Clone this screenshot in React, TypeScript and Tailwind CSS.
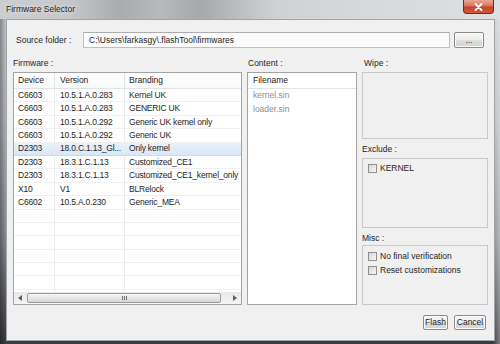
import React from "react";

const firmwares: [string, string, string][] = [
  ["C6603", "10.5.1.A.0.283", "Kernel UK"],
  ["C6603", "10.5.1.A.0.283", "GENERIC UK"],
  ["C6603", "10.5.1.A.0.292", "Generic UK kernel only"],
  ["C6603", "10.5.1.A.0.292", "Generic UK"],
  ["D2303", "18.0.C.1.13_Gl...", "Only kernel"],
  ["D2303", "18.3.1.C.1.13", "Customized_CE1"],
  ["D2303", "18.3.1.C.1.13", "Customized_CE1_kernel_only"],
  ["X10", "V1", "BLRelock"],
  ["C6602", "10.5.A.0.230", "Generic_MEA"],
];

const SELECTED = 4;

// small win7 style checkbox
const Checkbox = () => (
  <span className="block w-[9px] h-[9px] shrink-0 border border-[#8f8f8f] bg-[linear-gradient(135deg,#d6d6d6,#f7f7f7)]" />
);

const WinButton = ({ label, width }: { label: string; width: string }) => (
  <button
    className={`${width} h-full flex items-center justify-center rounded-[2px] border border-[#8a8a8a] bg-[linear-gradient(to_bottom,#f6f6f6_0%,#ececec_50%,#dedede_50%,#d4d4d4_100%)] shadow-[inset_0_0_0_1px_#fbfbfb] text-[#1c1c1c] leading-none`}
  >
    {label}
  </button>
);

const GroupBox = ({ className, children }: { className: string; children?: React.ReactNode }) => (
  <div className={`${className} border border-[#c9c9c9] bg-[#f0f0f0] flex flex-col`}>{children}</div>
);

const CheckRow = ({ label }: { label: string }) => (
  <div className="h-[14px] flex items-center gap-[3px] pl-[5px]">
    <Checkbox />
    <span>{label}</span>
  </div>
);

export default function App() {
  // pad the list with empty grid rows
  const rows = [...firmwares, ...Array(7).fill(["", "", ""])] as [string, string, string][];

  return (
    <div className="w-[500px] h-[344px] flex flex-col overflow-hidden font-['Liberation_Sans',Arial,sans-serif] text-[8.5px] text-[#1e1e1e] bg-[linear-gradient(to_right,rgba(0,0,0,0.35),transparent_7px,transparent_493px,rgba(255,255,255,0.35)),linear-gradient(to_bottom,#cfd2d5_0%,#b9bcc0_35%,#8d9094_70%,#3a3b3d_100%)]">
      {/* title bar */}
      <div className="relative h-[19px] shrink-0 flex items-center bg-[linear-gradient(to_right,#cbcdd0_0%,#c5c7ca_14%,#a9abae_24%,#b7b9bc_32%,#a6a8ab_40%,#cfd1d3_55%,#d8d9db_75%,#dedfe1_100%)]">
        <span className="pl-[6px] pb-[1px] text-[#1b1b1b] [text-shadow:0_0_4px_#ffffff]">Firmware Selector</span>
        <button className="absolute right-[6px] top-0 w-[31px] h-[14px] flex items-center justify-center rounded-b-[4px] border border-t-0 border-[#6d2a1e] bg-[linear-gradient(to_bottom,#e9a897_0%,#d8735c_45%,#c4452b_55%,#d0583b_100%)]">
          <svg width="9" height="8" viewBox="0 0 9 8">
            <path d="M1.5 1 L7.5 7 M7.5 1 L1.5 7" stroke="#ffffff" strokeWidth="1.8" strokeLinecap="round" />
          </svg>
        </button>
      </div>

      {/* client area */}
      <div className="flex-1 ml-[6px] mr-[5px] mb-[3px] border border-[#9fa4aa] bg-[#f0f0f0] flex flex-col px-[6px] pt-[12px] pb-[10px]">
        {/* source folder */}
        <div className="h-[16px] flex items-center ml-[3px] mr-[4px] shrink-0">
          <span className="w-[67px] shrink-0">Source folder :</span>
          <div className="flex-1 h-full flex items-center pl-[5px] border border-[#bcbfc4] border-t-[#abadb3] bg-[#fbfbfb]">
            C:\Users\farkasgy\.flashTool\firmwares
          </div>
          <div className="ml-[4px] h-full flex">
            <WinButton label="..." width="w-[30px]" />
          </div>
        </div>

        {/* panels */}
        <div className="mt-[7px] h-[250px] flex gap-[5px] shrink-0">
          {/* firmware table */}
          <div className="w-[229px] flex flex-col">
            <div className="h-[16px] flex items-center">Firmware :</div>
            <div className="mt-[1px] flex-1 border border-[#a3a3a3] bg-white flex flex-col overflow-hidden">
              <div className="h-[16px] shrink-0 flex border-b border-[#e3e3e3] bg-[linear-gradient(to_bottom,#ffffff,#f8f9fa)] text-[#222]">
                <div className="w-[41px] pl-[4px] flex items-center border-r border-[#e3e3e3]">Device</div>
                <div className="w-[70px] pl-[5px] flex items-center border-r border-[#e3e3e3]">Version</div>
                <div className="flex-1 pl-[4px] flex items-center">Branding</div>
              </div>
              <div className="flex-1 overflow-hidden tracking-[-0.2px]">
                {rows.map(([device, version, branding], i) => (
                  <div
                    key={i}
                    className={`h-[13.4px] flex whitespace-nowrap border-b ${
                      i === SELECTED
                        ? "bg-[linear-gradient(to_bottom,#e9f1fb,#dae7f6)] border-[#c5d9f1]"
                        : "border-[#f0f0f0]"
                    }`}
                  >
                    <div className="w-[41px] pl-[4px] flex items-center border-r border-[#ececec]">{device}</div>
                    <div className="w-[70px] pl-[5px] flex items-center border-r border-[#ececec] overflow-hidden">{version}</div>
                    <div className="flex-1 pl-[4px] flex items-center overflow-hidden">{branding}</div>
                  </div>
                ))}
              </div>
              {/* horizontal scrollbar */}
              <div className="h-[12px] shrink-0 flex items-center bg-[linear-gradient(to_bottom,#e8e8e8,#f4f4f4)]">
                <div className="w-[12px] h-full flex items-center justify-center">
                  <svg width="4" height="6" viewBox="0 0 4 6">
                    <path d="M4 0 L0 3 L4 6 Z" fill="#5f5f5f" />
                  </svg>
                </div>
                <div className="flex-1 h-full py-[1px]">
                  <div className="ml-[1px] w-[194px] h-full flex items-center justify-center gap-[1px] rounded-[2px] border border-[#9c9c9c] bg-[linear-gradient(to_bottom,#f4f4f4_0%,#e6e6e6_50%,#d6d6d6_100%)]">
                    <span className="w-[1px] h-[4px] bg-[#707070]" />
                    <span className="w-[1px] h-[4px] bg-[#707070]" />
                    <span className="w-[1px] h-[4px] bg-[#707070]" />
                  </div>
                </div>
                <div className="w-[12px] h-full flex items-center justify-center">
                  <svg width="4" height="6" viewBox="0 0 4 6">
                    <path d="M0 0 L4 3 L0 6 Z" fill="#5f5f5f" />
                  </svg>
                </div>
              </div>
            </div>
          </div>

          {/* content list */}
          <div className="w-[110px] flex flex-col">
            <div className="h-[16px] flex items-center pl-[1px]">Content :</div>
            <div className="mt-[1px] flex-1 border border-[#a3a3a3] bg-white flex flex-col">
              <div className="h-[16px] shrink-0 flex items-center pl-[5px] border-b border-[#e3e3e3] text-[#222]">Filename</div>
              <div className="h-[13.4px] flex items-center pl-[5px] text-[#8e8e8e]">kernel.sin</div>
              <div className="h-[13.4px] flex items-center pl-[5px] text-[#8e8e8e]">loader.sin</div>
            </div>
          </div>

          {/* options */}
          <div className="flex-1 flex flex-col">
            <div className="h-[16px] flex items-center pl-[2px]">Wipe :</div>
            <GroupBox className="mt-[1px] h-[67px]" />
            <div className="h-[19px] flex items-center pt-[1px]">Exclude :</div>
            <GroupBox className="h-[70px] pt-[2px]">
              <CheckRow label="KERNEL" />
            </GroupBox>
            <div className="h-[17px] flex items-center pt-[3px]">Misc :</div>
            <GroupBox className="flex-1 pt-[3px]">
              <CheckRow label="No final verification" />
              <CheckRow label="Reset customizations" />
            </GroupBox>
          </div>
        </div>

        {/* dialog buttons */}
        <div className="mt-[10px] h-[15px] flex justify-end gap-[6px] pr-[2px] shrink-0">
          <WinButton label="Flash" width="w-[25px]" />
          <WinButton label="Cancel" width="w-[32px]" />
        </div>
      </div>
    </div>
  );
}
